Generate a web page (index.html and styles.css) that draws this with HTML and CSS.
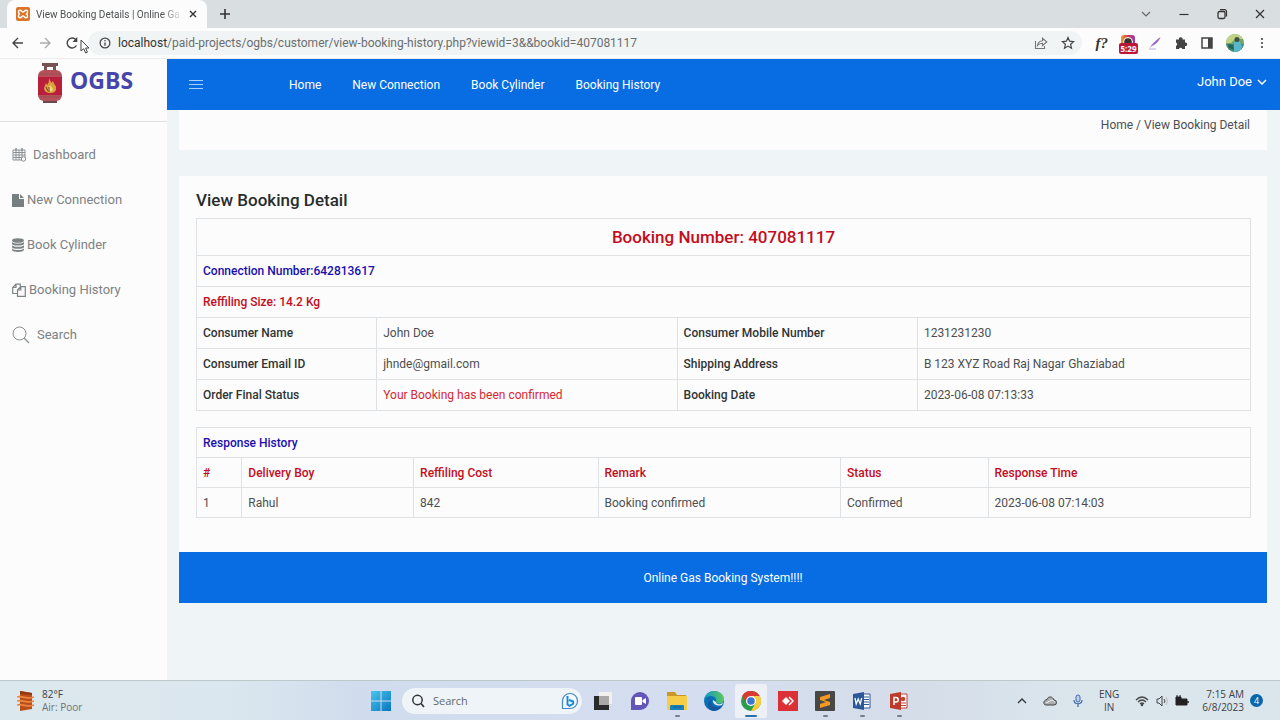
FILE: index.html
```html
<!DOCTYPE html>
<html lang="en">
<head>
<meta charset="utf-8">
<meta name="viewport" content="width=device-width, initial-scale=1">
<title>View Booking Details | Online Gas Booking System</title>
<link rel="stylesheet" href="styles.css">
</head>
<body>
<div class="desktop">
  <header class="tabstrip">
    <div class="tab">
      <svg class="favicon" viewBox="0 0 14 14" width="14" height="14"><rect width="14" height="14" rx="2" fill="#dc7428"/><path d="M4 3.2c1.700 0 1.700 1.800 3 1.800s1.300-1.800 3-1.800c2 0 2 2.600.5 3.800 1.500 1.200 1.500 3.800-.5 3.800-1.700 0-1.700-1.800-3-1.800s-1.300 1.800-3 1.800c-2 0-2-2.600-.5-3.800C2 5.800 2 3.200 4 3.200z" fill="none" stroke="#fff" stroke-width="1.400"/></svg>
      <span class="tab-title">View Booking Details | Online Ga</span>
      <button class="bare" aria-label="Close tab"><svg viewBox="0 0 8 8" width="8" height="8"><path d="M1 1l6 6M7 1L1 7" stroke="#333" stroke-width="1.400"/></svg></button>
    </div>
    <button class="bare new-tab" aria-label="New tab"><svg viewBox="0 0 12 12" width="12" height="12"><path d="M6 1v10M1 6h10" stroke="#333" stroke-width="1.600"/></svg></button>
    <div class="window-controls">
      <button class="bare" aria-label="Search tabs"><svg viewBox="0 0 12 12" width="12" height="12"><path d="M2 4l4 4 4-4" fill="none" stroke="#666" stroke-width="1.200"/></svg></button>
      <button class="bare" aria-label="Minimize"><svg viewBox="0 0 12 12" width="12" height="12"><path d="M1.500 6.500h9" stroke="#333" stroke-width="1.200"/></svg></button>
      <button class="bare" aria-label="Restore"><svg viewBox="0 0 12 12" width="12" height="12"><rect x="2" y="3.500" width="7" height="7" rx="1.500" fill="none" stroke="#333" stroke-width="1.300"/><path d="M4 1.600h4.500a2 2 0 0 1 2 2V8.500" fill="none" stroke="#333" stroke-width="1.200"/></svg></button>
      <button class="bare" aria-label="Close"><svg viewBox="0 0 12 12" width="12" height="12"><path d="M2 2l8 8M10 2l-8 8" stroke="#333" stroke-width="1.200"/></svg></button>
    </div>
  </header>

  <div class="toolbar">
    <div class="history-buttons">
      <button class="bare" aria-label="Back"><svg viewBox="0 0 14 14" width="14" height="14"><path d="M12 7H2M7 2L2 7l5 5" fill="none" stroke="#444" stroke-width="1.400"/></svg></button>
      <button class="bare" aria-label="Forward"><svg viewBox="0 0 14 14" width="14" height="14"><path d="M2 7h10M7 2l5 5-5 5" fill="none" stroke="#aaa" stroke-width="1.300"/></svg></button>
      <button class="bare" aria-label="Reload"><svg viewBox="0 0 14 14" width="14" height="14"><path d="M11.500 9.500A5 5 0 1 1 11.200 4" fill="none" stroke="#444" stroke-width="1.400"/><path d="M12.300 1v5H7.500z" fill="#444"/></svg></button>
    </div>
    <svg class="pointer" viewBox="0 0 10 16" width="10" height="16"><path d="M1 1v11l2.700-2.300L5.600 14l1.800-.8L5.600 9H9z" fill="#fff" stroke="#444" stroke-width="1"/></svg>
    <div class="address">
      <svg viewBox="0 0 12 12" width="12" height="12"><circle cx="6" cy="6" r="4.900" fill="none" stroke="#444" stroke-width="1.200"/><path d="M6 5.400v3.300M6 3v1.300" stroke="#444" stroke-width="1.300"/></svg>
      <a class="url" href="#"><span class="host">localhost</span>/paid-projects/ogbs/customer/view-booking-history.php?viewid=3&amp;&amp;bookid=407081117</a>
      <button class="bare" aria-label="Share"><svg viewBox="0 0 14 14" width="14" height="14"><path d="M1.500 5v7.500h9V10" fill="none" stroke="#777" stroke-width="1.100"/><path d="M3.500 9.500C4 6 6 4.800 8.500 4.700V2.300L12.800 6 8.500 9.500V7.200C6.300 7.200 5 7.600 3.500 9.500z" fill="none" stroke="#777" stroke-width="1.100"/></svg></button>
      <button class="bare" aria-label="Bookmark"><svg viewBox="0 0 14 14" width="14" height="14"><path d="M7 1.500l1.600 3.700 4 .4-3 2.700.9 3.900L7 10.100l-3.500 2.100.9-3.900-3-2.700 4-.4z" fill="none" stroke="#444" stroke-width="1.200"/></svg></button>
    </div>
    <div class="extensions">
      <button class="bare font-finder">f?</button>
      <button class="bare timer" aria-label="Timer 5:29">
        <svg viewBox="0 0 16 16" width="16" height="16"><defs><linearGradient id="ring"><stop stop-color="#e7a321"/><stop offset=".5" stop-color="#d33a55"/><stop offset="1" stop-color="#923ab5"/></linearGradient></defs><rect x="1" y="0" width="14" height="13" rx="3" fill="url(#ring)"/><circle cx="8" cy="7" r="5" fill="#f3dfe0"/><circle cx="8" cy="7" r="3.800" fill="#333"/></svg>
        <span class="timer-badge">5:29</span>
      </button>
      <button class="bare" aria-label="Feather"><svg viewBox="0 0 14 14" width="14" height="14"><path d="M1 12.500C4 8 8 4 12.500 1 11 5.500 7 9 3 10.500" fill="#9266c8"/><path d="M1 13h7" stroke="#c4aadd"/></svg></button>
      <button class="bare" aria-label="Extensions"><svg viewBox="0 0 14 14" width="14" height="14"><path d="M2 3.500h3a1.800 1.800 0 1 1 3.500 0H11v3a1.800 1.800 0 1 1 0 3.500v3H8.300a1.700 1.700 0 0 0-3.300 0H2v-3a1.800 1.800 0 0 0 0-3.400z" fill="#444"/></svg></button>
      <button class="bare" aria-label="Side panel"><svg viewBox="0 0 14 14" width="14" height="14"><rect x="2" y="2" width="10" height="10" fill="none" stroke="#444" stroke-width="1.500"/><path d="M8 2h4v10H8z" fill="#444"/></svg></button>
      <button class="bare" aria-label="Profile"><svg viewBox="0 0 18 18" width="18" height="18"><defs><clipPath id="round"><circle cx="9" cy="9" r="9"/></clipPath></defs><g clip-path="url(#round)"><path d="M0 0h18v18H0z" fill="#6fa66a"/><path d="M0 0h18v5H9L5 9H0z" fill="#c3d386"/><path d="M0 10h18v8H0z" fill="#438b80"/><path d="M8 8l5-1 3 5-2 6H8z" fill="#58b8ca"/><circle cx="11" cy="5.500" r="2.500" fill="#415147"/><path d="M2 10l5 1 1 5-5-2z" fill="#256454"/></g></svg></button>
      <button class="bare more" aria-label="Menu"><svg viewBox="0 0 4 14" width="4" height="14" fill="#444"><circle cx="2" cy="3" r="1.100"/><circle cx="2" cy="7" r="1.100"/><circle cx="2" cy="11" r="1.100"/></svg></button>
    </div>
  </div>

  <div class="page">
    <aside class="sidebar">
      <a class="brand" href="#">
        <svg viewBox="0 0 26 42" width="26" height="42"><path d="M5 1h16v3h-2v5h-3V5h-6v4H7V4H5z" fill="#795353"/><path d="M6 37h14v4H6z" fill="#694851"/><rect x="1" y="8" width="24" height="31" rx="6" fill="#b65058"/><path d="M1 15h24v18H1z" fill="#b91f3d"/><path d="M12 16c1 3 2 3 2 5l2-2c1 4 4 5 3 8 0 3-3 4-6 4s-6-2-6-5l2-5 1 2c2-2 2-4 2-7z" fill="#dba13c"/><path d="M13 23l3 4c0 3-4 3-5 1z" fill="#f0d679"/><path d="M12 25v5M9 25l2 4" stroke="#79372d"/><path d="M2 12h22M2 35h22" stroke="#9a4c56" stroke-width="1"/></svg>
        <span>OGBS</span>
      </a>
      <nav class="side-nav">
        <a class="spaced" href="#"><svg viewBox="0 0 14 14" width="14" height="14"><path d="M1 2h12v10H1zM1 4.500h12M1 7h12M1 9.500h12M4 2v10M7 2v10M10 2v10" fill="none" stroke="#8b9192" stroke-width="1"/><path d="M4 0v3M10 0v3" stroke="#8b9192" stroke-width="1.500"/><circle cx="11.500" cy="11" r="2.200" fill="#fcfcfc" stroke="#8b9192"/></svg>Dashboard</a>
        <a href="#"><svg viewBox="0 0 12 14" width="12" height="14" fill="#768080"><path d="M0 1h7v5h5v8H0z"/><path d="M8 1l4 4H8z"/></svg>New Connection</a>
        <a href="#"><svg viewBox="0 0 12 14" width="12" height="14" fill="#7b8384"><ellipse cx="6" cy="2.500" rx="6" ry="2.300"/><path d="M0 4c2 2 10 2 12 0v2c-1 2-11 2-12 0zM0 7.300c2 2 10 2 12 0v2c-1 2-11 2-12 0zM0 10.600c2 2 10 2 12 0v1.400c-1 2.500-11 2.500-12 0z"/></svg>Book Cylinder</a>
        <a href="#"><svg viewBox="0 0 14 14" width="14" height="14"><path d="M5 10.500H.7V4.500L4 1.200h4.300v2.500M4 1.200v3.300H.7M5.500 7L8.800 3.700h4.500v9.600H5.500zM8.800 3.700V7H5.500" fill="none" stroke="#7b8384" stroke-width="1.200"/></svg>Booking History</a>
        <a class="spaced" href="#"><svg class="lens" viewBox="0 0 18 18" width="18" height="18"><circle cx="7.500" cy="7.500" r="6.500" fill="none" stroke="#8b8f90"/><path d="M12 12l5 5" stroke="#8b8f90" stroke-width="1.300"/></svg>Search</a>
      </nav>
    </aside>

    <div class="main">
      <header class="navbar">
        <button class="bare" aria-label="Toggle menu"><svg viewBox="0 0 14 12" width="14" height="12"><path d="M0 1.500h14M0 5.500h14M0 9.500h14" stroke="#a5d2ff" stroke-width="1"/></svg></button>
        <nav class="top-nav">
          <a href="#">Home</a><a href="#">New Connection</a><a href="#">Book Cylinder</a><a href="#">Booking History</a>
        </nav>
        <button class="bare user">John Doe <svg viewBox="0 0 10 6" width="10" height="6"><path d="M1 1l4 4 4-4" fill="none" stroke="#fff" stroke-width="1.500"/></svg></button>
      </header>
      <div class="content">
        <nav class="breadcrumb"><a href="#">Home</a> / <span>View Booking Detail</span></nav>
        <main class="card">
          <h1>View Booking Detail</h1>
          <table class="details">
            <colgroup><col class="w-label"><col class="w-value"><col class="w-label2"><col></colgroup>
            <tbody>
              <tr><th class="number" colspan="4">Booking Number: 407081117</th></tr>
              <tr><th class="blue" colspan="4">Connection Number:642813617</th></tr>
              <tr><th class="red" colspan="4">Reffiling Size: 14.2 Kg</th></tr>
              <tr><th>Consumer Name</th><td>John Doe</td><th>Consumer Mobile Number</th><td>1231231230</td></tr>
              <tr><th>Consumer Email ID</th><td>jhnde@gmail.com</td><th>Shipping Address</th><td>B 123 XYZ Road Raj Nagar Ghaziabad</td></tr>
              <tr><th>Order Final Status</th><td class="notice">Your Booking has been confirmed</td><th>Booking Date</th><td>2023-06-08 07:13:33</td></tr>
            </tbody>
          </table>
          <table class="responses">
            <colgroup><col class="w-index"><col class="w-boy"><col class="w-cost"><col class="w-remark"><col class="w-status"><col></colgroup>
            <thead>
              <tr><th class="blue" colspan="6">Response History</th></tr>
              <tr class="red"><th>#</th><th>Delivery Boy</th><th>Reffiling Cost</th><th>Remark</th><th>Status</th><th>Response Time</th></tr>
            </thead>
            <tbody>
              <tr><td>1</td><td>Rahul</td><td>842</td><td>Booking confirmed</td><td>Confirmed</td><td>2023-06-08 07:14:03</td></tr>
            </tbody>
          </table>
        </main>
        <footer class="footer">Online Gas Booking System!!!!</footer>
      </div>
    </div>
  </div>

  <footer class="taskbar">
    <button class="bare weather">
      <svg viewBox="0 0 18 22" width="18" height="22"><path d="M3 1l12 2v16L3 21z" fill="#b94f16"/><path d="M0 7c5-2 8 3 17 0M0 11c5-2 8 3 17 0M0 15c5-2 8 3 17 0" fill="none" stroke="#ec8440" stroke-width="1.600"/><path d="M3 1l12 2v2L3 4z" fill="#933811"/></svg>
      <span class="stack"><span>82°F</span><span class="muted">Air: Poor</span></span>
    </button>
    <div class="apps">
      <button class="bare app" aria-label="Start"><svg viewBox="0 0 20 20" width="20" height="20"><defs><linearGradient id="win" x2="1" y2="1"><stop stop-color="#49c5ed"/><stop offset="1" stop-color="#0875bf"/></linearGradient></defs><path d="M0 0h9.500v9.500H0zM10.500 0H20v9.500h-9.500zM0 10.500h9.500V20H0zM10.500 10.500H20V20h-9.500z" fill="url(#win)"/></svg></button>
      <label class="search">
        <svg viewBox="0 0 14 14" width="14" height="14"><circle cx="6.500" cy="6" r="4.700" fill="none" stroke="#333" stroke-width="1.500"/><path d="M10 9.500l3 3.500" stroke="#333" stroke-width="1.700"/></svg>
        <input type="text" placeholder="Search" aria-label="Search">
        <svg viewBox="0 0 18 18" width="18" height="18"><path d="M1.500 16.500V9a7.500 7.500 0 1 1 7.500 7.500z" fill="#f3faff" stroke="#4586c4" stroke-width="1.200"/><path d="M6.500 4v8.500l2 1.300 3.700-2V9.500L8 8" fill="none" stroke="#1687d5" stroke-width="1.900"/></svg>
      </label>
      <button class="bare app" aria-label="Task view"><svg viewBox="0 0 20 20" width="20" height="20"><path d="M6 1h13v12H6z" fill="#f1f1ed"/><path d="M1 5h15v14H1z" fill="#292b2c"/><path d="M6 5h10v9H6z" fill="#aaa9a6"/></svg></button>
      <button class="bare app" aria-label="Chat"><svg viewBox="0 0 20 20" width="20" height="20"><path d="M1 19V10a9 9 0 1 1 9 9z" fill="#6257b9"/><rect x="5" y="6" width="7" height="8" rx="1" fill="#fff"/><path d="M12.500 9l3.500-2v6l-3.500-2z" fill="#fff"/></svg></button>
      <button class="bare app open" aria-label="File Explorer"><svg viewBox="0 0 20 20" width="20" height="20"><path d="M0 1h8l2 3h9v5H0z" fill="#c99725"/><path d="M0 5h20v14H0z" fill="#f5cd46"/><path d="M3 19v-4q0-1 1-1h12q1 0 1 1v4z" fill="#1681bd"/><path d="M6 16h8" stroke="#0a5e96"/></svg></button>
      <button class="bare app" aria-label="Edge"><svg viewBox="0 0 20 20" width="20" height="20"><defs><linearGradient id="edge" x2="1"><stop stop-color="#1495cb"/><stop offset="1" stop-color="#5ac85b"/></linearGradient></defs><circle cx="10" cy="10" r="10" fill="#0c6fb5"/><path d="M0 10C0 4 5 0 10 0c6 0 10 4 10 8 0 5-6 6-8 3 1-4-2-6-5-6-4 0-7 3-7 5z" fill="url(#edge)"/><path d="M8 9c-3 6 4 9 10 6-2 3-5 5-9 5C2 18 3 10 8 9z" fill="#1657a0"/><path d="M9 9c-1 3 3 7 9 5l2-4c-1 4-8 4-8 1z" fill="#dbe8f2"/></svg></button>
      <button class="bare app active open" aria-label="Chrome"><svg viewBox="0 0 20 20" width="20" height="20"><circle cx="10" cy="10" r="10" fill="#2b9b4c"/><path d="M10 10L1.300 5A10 10 0 0 1 18.700 5z" fill="#d93b32"/><path d="M10 5h8.700A10 10 0 0 1 10 20l4.300-7.500z" fill="#f8cc3d"/><path d="M1.300 5A10 10 0 0 1 10 0v7L6 13z" fill="#d93b32"/><circle cx="10" cy="10" r="5" fill="#fff"/><circle cx="10" cy="10" r="3.800" fill="#3977d5"/></svg></button>
      <button class="bare app" aria-label="AnyDesk"><svg viewBox="0 0 20 20" width="20" height="20"><path d="M0 0h20v20H0z" fill="#dc3037"/><path d="M8 6l4 4-4 4-4-4z" fill="#fff"/><path d="M11 6l4 4-4 4" fill="none" stroke="#fff" stroke-width="1.500"/></svg></button>
      <button class="bare app open" aria-label="Sublime Text"><svg viewBox="0 0 20 20" width="20" height="20"><rect width="20" height="20" rx="1" fill="#474747"/><path d="M5 6l10-3v4L9 9l6 2v3L5 17v-4l6-2-6-2z" fill="#f59a20"/></svg></button>
      <button class="bare app open" aria-label="Word"><svg viewBox="0 0 20 20" width="20" height="20"><path d="M9 3h9v14H9z" fill="#fff" stroke="#31579a"/><path d="M12 6h5M12 8.500h5M12 11h5M12 13.500h5" stroke="#31579a"/><path d="M1 3l11-2v18L1 17z" fill="#2b579a"/><path d="M3 7l1.200 6L6.200 8l2 5L9.700 7" fill="none" stroke="#fff" stroke-width="1.300"/></svg></button>
      <button class="bare app open" aria-label="PowerPoint"><svg viewBox="0 0 20 20" width="20" height="20"><path d="M9 3h9v14H9z" fill="#fff" stroke="#c24534"/><path d="M12 12h5M12 14.500h5" stroke="#c24534"/><circle cx="14" cy="8" r="2.300" fill="#c24534"/><path d="M1 3l11-2v18L1 17z" fill="#bd3a2b"/><path d="M5 14V6.500h2a2 2 0 0 1 0 4.500H5" fill="none" stroke="#fff" stroke-width="1.500"/></svg></button>
    </div>
    <div class="tray">
      <button class="bare" aria-label="Show hidden icons"><svg viewBox="0 0 10 10" width="10" height="10"><path d="M1 7l4-4 4 4" fill="none" stroke="#333" stroke-width="1.300"/></svg></button>
      <button class="bare cloud" aria-label="OneDrive"><svg viewBox="0 0 14 10" width="14" height="10"><path d="M3 9h8a2.500 2.500 0 0 0 0-5C9.500 0 5 0 4 3.500 0 4 0 9 3 9z" fill="#a9adad" stroke="#444"/><path d="M3 7l6-3 3 2" fill="none" stroke="#eee"/></svg></button>
      <button class="bare" aria-label="Microphone"><svg viewBox="0 0 10 14" width="10" height="14"><rect x="3" y="1" width="4" height="7" rx="2" fill="#bfd0ed" stroke="#4368ad"/><path d="M1 6c0 5 8 5 8 0M5 10v3" fill="none" stroke="#4368ad" stroke-width="1.200"/></svg></button>
      <button class="bare stack language"><span>ENG</span><span>IN</span></button>
      <button class="bare status" aria-label="Network, sound and battery">
        <svg viewBox="0 0 14 12" width="14" height="12" fill="none" stroke="#444" stroke-width="1.200"><path d="M1 5q6-6 12 0M3 7q4-4 8 0M5 9q2-2 4 0"/><circle cx="7" cy="10" r=".6"/></svg>
        <svg viewBox="0 0 14 12" width="14" height="12" fill="none" stroke="#444"><path d="M2 4h2l3-3v10L4 8H2zM9 4q2 2 0 4"/><path d="M11 2q3 4 0 8" stroke="#bbb"/></svg>
        <svg viewBox="0 0 14 12" width="14" height="12"><path d="M1 4h11v6H1z" fill="#222" stroke="#222"/><path d="M13 6v2" stroke="#222" stroke-width="1.500"/><path d="M2 0v2M5 0v2M1 2h5v2l-2 2-3-2z" fill="#222" stroke="#222"/></svg>
      </button>
      <button class="bare stack clock"><span>7:15 AM</span><span>6/8/2023</span></button>
      <span class="count">4</span>
    </div>
  </footer>
</div>
</body>
</html>
```

FILE: styles.css
```css
* { box-sizing: border-box; }
body { margin: 0; font-family: Roboto, sans-serif; font-size: 12px; color: #4c4f50; }
a { color: inherit; text-decoration: none; }
svg { display: block; flex: none; }
.bare { border: 0; padding: 0; background: none; font: inherit; color: inherit; display: flex; align-items: center; justify-content: center; }
.desktop { min-height: 100vh; display: flex; flex-direction: column; background: #fcfcfc; }

/* Browser window */
.tabstrip { display: flex; align-items: center; height: 28px; background: #d9dee1; padding: 0 14px 0 7px; }
.tab { display: flex; align-items: center; gap: 6px; width: 200px; height: 28px; padding: 0 10px 0 9px; background: #fcfcfc; border-radius: 8px 8px 0 0; font-size: 10px; }
.tab-title { flex: 1; white-space: nowrap; mask-image: linear-gradient(to right, #000 85%, transparent); }
.new-tab { margin-left: 12px; }
.window-controls { display: flex; gap: 26px; margin-left: auto; }
.toolbar { position: relative; display: flex; align-items: center; height: 31px; padding: 0 16px 0 11px; border-bottom: 1px solid #eceeee; }
.history-buttons { display: flex; gap: 13px; }
.pointer { position: absolute; left: 80px; top: 11px; }
.address { flex: 1; display: flex; align-items: center; gap: 13px; height: 24px; margin-left: 9px; padding: 0 7px 0 11px; border-radius: 12px; background: #f1f4f4; }
.url { flex: 1; margin-left: -6px; font-size: 12px; color: #6a6e6f; white-space: nowrap; }
.host { color: #303334; }
.extensions { display: flex; align-items: center; gap: 12px; margin-left: 14px; }
.more { margin-left: 4px; }
.font-finder { font-family: "Liberation Serif", serif; font-size: 15px; font-style: italic; font-weight: bold; color: #333; }
.timer { position: relative; }
.timer-badge { position: absolute; left: -1px; top: 8px; width: 19px; height: 11px; border-radius: 2px; background: #bd1837; color: #fff; font-family: "Open Sans", sans-serif; font-size: 8px; font-weight: bold; line-height: 11px; text-align: center; }

/* Booking site */
.page { flex: 1; display: flex; background: #eff5f6; }
.sidebar { flex: none; width: 167px; background: #fcfcfd; }
.brand { display: flex; gap: 7px; height: 63px; padding: 3px 0 0 37px; border-bottom: 1px solid #dedfe0; font-family: "Open Sans", sans-serif; font-size: 23px; font-weight: bold; line-height: 36px; color: #4646aa; }
.side-nav { display: flex; flex-direction: column; gap: 25px; padding: 23px 12px; font-size: 13px; line-height: 20px; color: #7d8283; }
.side-nav a { display: flex; align-items: center; gap: 3px; }
.side-nav .spaced { gap: 7px; }
.main { flex: 1; min-width: 0; }
.navbar { display: flex; align-items: center; height: 51px; padding: 0 13px 0 22px; background: #086de3; color: #fff; }
.top-nav { display: flex; gap: 31px; margin-left: 86px; }
.user { gap: 5px; margin-left: auto; padding-bottom: 6px; font-size: 13px; }
.content { padding: 0 13px 24px 12px; }
.breadcrumb { height: 40px; padding: 6px 17px; background: #fcfcfd; line-height: 18px; text-align: right; }
.card { margin-top: 26px; padding: 14px 16px 34px 17px; background: #fcfcfc; }
h1 { margin: 0 0 8px; font-size: 17px; font-weight: 500; line-height: 20px; color: #282c2d; }
table { width: 100%; border-collapse: collapse; table-layout: fixed; line-height: 18px; }
th, td { padding: 6px; border: 1px solid #dfe2e4; text-align: left; font-weight: 400; }
th { font-weight: 500; color: #303435; }
.responses { margin-top: 16px; }
.responses th, .responses td { padding: 6px 6px 5px; }
.details .number { padding: 8px; font-size: 17px; font-weight: 500; line-height: 20px; text-align: center; color: #c30d1d; }
th.blue { color: #1a0eae; }
th.red, .red th { color: #c30d1d; }
.notice { color: #d82635; }
.w-label { width: 17.1%; }
.w-value { width: 28.5%; }
.w-label2 { width: 22.8%; }
.w-index { width: 4.3%; }
.w-boy { width: 16.3%; }
.w-cost { width: 17.5%; }
.w-remark { width: 23%; }
.w-status { width: 14%; }
.footer { display: flex; align-items: center; justify-content: center; height: 51px; background: #086de3; color: #fff; }

/* Desktop taskbar */
.taskbar { display: grid; grid-template-columns: 1fr auto 1fr; align-items: center; height: 40px; padding: 0 17px 0 17px; border-top: 1px solid #bcc8ca; background: linear-gradient(to right, #dbe8ed 0, #dbe7ee 18%, #d0dced 28%, #d5def0 55%, #d5dde9 72%, #dae6ec 84%); font-family: "Open Sans", sans-serif; font-size: 10px; color: #3c4143; }
.weather { justify-self: start; gap: 7px; }
.stack { display: flex; flex-direction: column; line-height: 13px; }
.weather .stack { align-items: flex-start; }
.muted { color: #6b7375; }
.apps { display: flex; align-items: center; gap: 5px; }
.app { position: relative; width: 32px; height: 34px; }
.active { border-radius: 3px; background: #edf1f7; }
.open::after { content: ""; position: absolute; left: 14px; bottom: 1px; width: 5px; height: 2px; border-radius: 1px; background: #767f87; }
.active::after { left: 10px; width: 12px; background: #2672a8; }
.search { display: flex; align-items: center; gap: 8px; width: 180px; height: 26px; padding: 0 3px 0 9px; border-radius: 13px; background: #eef4f7; }
.search input { flex: 1; min-width: 0; border: 0; padding: 0; background: none; font: inherit; font-size: 11px; color: #3c4143; }
.search input::placeholder { color: #64696b; opacity: 1; }
.tray { justify-self: end; display: flex; align-items: center; gap: 16px; }
.status { gap: 6px; }
.clock { align-items: flex-end; margin-left: -3px; }
.count { width: 13px; height: 13px; margin-left: -10px; border-radius: 50%; background: #0866ad; color: #fff; font-size: 9px; line-height: 13px; text-align: center; }
```
